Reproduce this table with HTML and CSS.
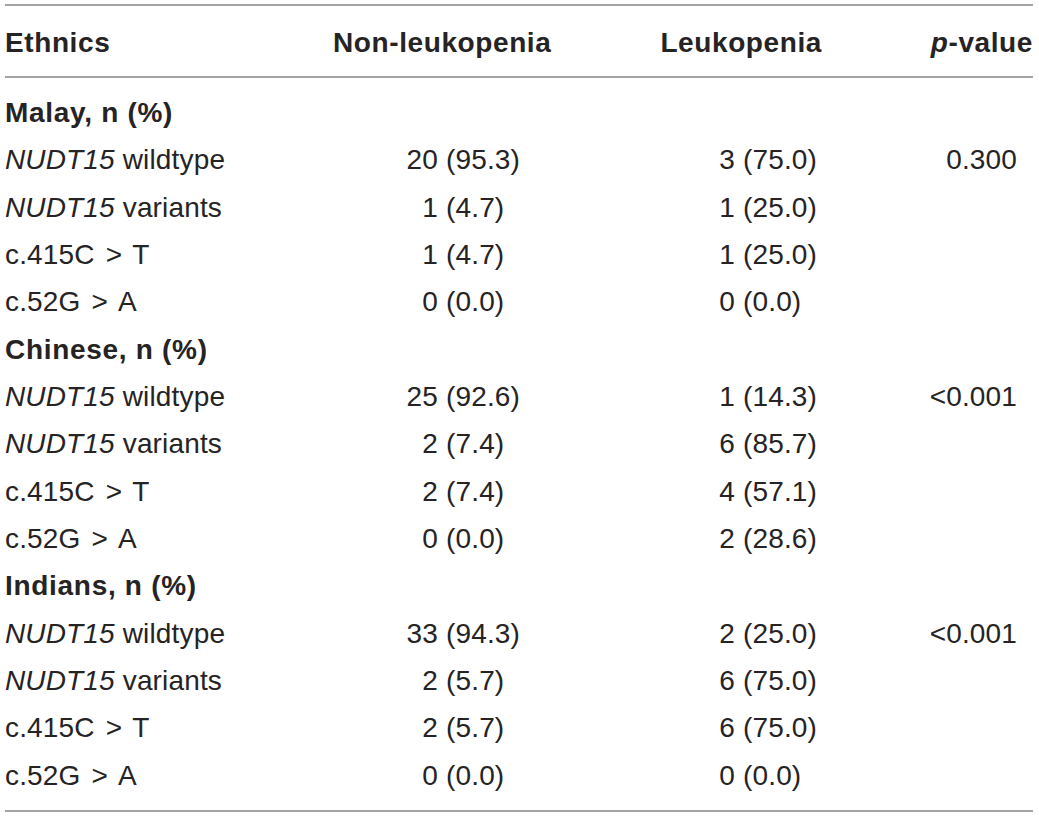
FILE: index.html
```html
<!DOCTYPE html>
<html lang="en">
<head>
<meta charset="UTF-8" />
<title>NUDT15 variants by ethnicity</title>
<link rel="stylesheet" href="styles.css">
</head>
<body>

<div class="tbl">
  <!-- Header -->
  <div class="row head">
    <div class="c label">Ethnics</div>
    <div class="c h-non">Non-leukopenia</div>
    <div class="c h-leuk">Leukopenia</div>
    <div class="c h-p"><i>p</i>-value</div>
  </div>

  <div class="body">
    <!-- Malay -->
    <div class="row group"><div class="c label">Malay, n (%)</div></div>
    <div class="row">
      <div class="c label"><i>NUDT15</i> wildtype</div>
      <div class="c val non"><span class="n">20</span><span class="pct">(95.3)</span></div>
      <div class="c val leuk"><span class="n">3</span><span class="pct">(75.0)</span></div>
      <div class="c pval">0.300</div>
    </div>
    <div class="row">
      <div class="c label"><i>NUDT15</i> variants</div>
      <div class="c val non"><span class="n">1</span><span class="pct">(4.7)</span></div>
      <div class="c val leuk"><span class="n">1</span><span class="pct">(25.0)</span></div>
      <div class="c pval"></div>
    </div>
    <div class="row">
      <div class="c label">c.415C<span class="gt">&gt;</span>T</div>
      <div class="c val non"><span class="n">1</span><span class="pct">(4.7)</span></div>
      <div class="c val leuk"><span class="n">1</span><span class="pct">(25.0)</span></div>
      <div class="c pval"></div>
    </div>
    <div class="row">
      <div class="c label">c.52G<span class="gt">&gt;</span>A</div>
      <div class="c val non"><span class="n">0</span><span class="pct">(0.0)</span></div>
      <div class="c val leuk"><span class="n">0</span><span class="pct">(0.0)</span></div>
      <div class="c pval"></div>
    </div>

    <!-- Chinese -->
    <div class="row group"><div class="c label">Chinese, n (%)</div></div>
    <div class="row">
      <div class="c label"><i>NUDT15</i> wildtype</div>
      <div class="c val non"><span class="n">25</span><span class="pct">(92.6)</span></div>
      <div class="c val leuk"><span class="n">1</span><span class="pct">(14.3)</span></div>
      <div class="c pval">&lt;0.001</div>
    </div>
    <div class="row">
      <div class="c label"><i>NUDT15</i> variants</div>
      <div class="c val non"><span class="n">2</span><span class="pct">(7.4)</span></div>
      <div class="c val leuk"><span class="n">6</span><span class="pct">(85.7)</span></div>
      <div class="c pval"></div>
    </div>
    <div class="row">
      <div class="c label">c.415C<span class="gt">&gt;</span>T</div>
      <div class="c val non"><span class="n">2</span><span class="pct">(7.4)</span></div>
      <div class="c val leuk"><span class="n">4</span><span class="pct">(57.1)</span></div>
      <div class="c pval"></div>
    </div>
    <div class="row">
      <div class="c label">c.52G<span class="gt">&gt;</span>A</div>
      <div class="c val non"><span class="n">0</span><span class="pct">(0.0)</span></div>
      <div class="c val leuk"><span class="n">2</span><span class="pct">(28.6)</span></div>
      <div class="c pval"></div>
    </div>

    <!-- Indians -->
    <div class="row group"><div class="c label">Indians, n (%)</div></div>
    <div class="row">
      <div class="c label"><i>NUDT15</i> wildtype</div>
      <div class="c val non"><span class="n">33</span><span class="pct">(94.3)</span></div>
      <div class="c val leuk"><span class="n">2</span><span class="pct">(25.0)</span></div>
      <div class="c pval">&lt;0.001</div>
    </div>
    <div class="row">
      <div class="c label"><i>NUDT15</i> variants</div>
      <div class="c val non"><span class="n">2</span><span class="pct">(5.7)</span></div>
      <div class="c val leuk"><span class="n">6</span><span class="pct">(75.0)</span></div>
      <div class="c pval"></div>
    </div>
    <div class="row">
      <div class="c label">c.415C<span class="gt">&gt;</span>T</div>
      <div class="c val non"><span class="n">2</span><span class="pct">(5.7)</span></div>
      <div class="c val leuk"><span class="n">6</span><span class="pct">(75.0)</span></div>
      <div class="c pval"></div>
    </div>
    <div class="row">
      <div class="c label">c.52G<span class="gt">&gt;</span>A</div>
      <div class="c val non"><span class="n">0</span><span class="pct">(0.0)</span></div>
      <div class="c val leuk"><span class="n">0</span><span class="pct">(0.0)</span></div>
      <div class="c pval"></div>
    </div>
  </div>
</div>

</body>
</html>
```

FILE: styles.css
```css
body {
  margin: 0;
  background: #ffffff;
  font-family: 'Liberation Sans', Arial, sans-serif;
  font-size: 28px;
  color: #262324;
}
.tbl {
  width: 1028px;
  margin: 4px 0 0 5px;
  border-top: 2px solid #a3a3a3;
  border-bottom: 2px solid #a3a3a3;
}
.row {
  display: grid;
  grid-template-columns: 328px 227px 262px 211px;
  height: 47.33px;
  line-height: 47.33px;
  white-space: nowrap;
  letter-spacing: 0.15px;
}
.head {
  height: 62px;
  line-height: 62px;
  padding: 6px 0 2px;
  font-weight: 700;
  letter-spacing: 0.6px;
  border-bottom: 2px solid #a3a3a3;
}
.body {
  padding: 11px 0 11px;
}
.group {
  font-weight: 700;
  letter-spacing: 0.7px;
}
.gt {
  margin: 0 10px 0 11px;
}
.h-leuk,
.h-p {
  text-align: right;
}
.val {
  display: flex;
}
.val .n {
  text-align: right;
}
.non .n {
  width: 105px;
}
.leuk .n {
  width: 175px;
}
.val .pct {
  padding-left: 8px;
}
.pval {
  text-align: right;
  padding-right: 16px;
}
```
